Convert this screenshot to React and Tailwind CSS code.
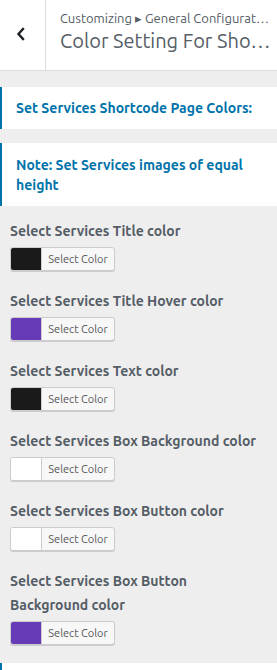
import React from "react";

const font = { fontFamily: "Ubuntu, 'Noto Sans', 'Open Sans', sans-serif" };

function ColorControl({ label, color }) {
  return (
    <div className="px-[10px] pb-[18px]">
      <div className="text-[14px] leading-[24px] font-bold text-[#555d66]">{label}</div>
      <div className="mt-[4px] flex h-[24px] w-[105px] overflow-hidden rounded-[3px] border border-[#ccc] bg-[#f7f7f7] shadow-[0_1px_0_#ccc]">
        <div className="w-[30px] shrink-0" style={{ backgroundColor: color }} />
        <div className="flex flex-1 items-center justify-center border-l border-[#ccc] text-[11px] text-[#555]">
          Select Color
        </div>
      </div>
    </div>
  );
}

export default function App() {
  const controls = [
    ["Select Services Title color", "#1a1a1a"],
    ["Select Services Title Hover color", "#673ab7"],
    ["Select Services Text color", "#1a1a1a"],
    ["Select Services Box Background color", "#ffffff"],
    ["Select Services Box Button color", "#ffffff"],
    ["Select Services Box Button Background color", "#673ab7"],
  ];
  return (
    <div className="h-[670px] w-[277px] overflow-hidden bg-[#eeeeee]" style={font}>
      <div className="flex h-[71px] border-b border-[#ddd] bg-white">
        <div className="flex w-[46px] shrink-0 items-center justify-center border-r border-[#ddd]">
          <svg width="10" height="14" viewBox="0 0 10 14" className="-ml-[4px] -mt-[2px]">
            <path d="M7 2 L2.5 7 L7 12" fill="none" stroke="#1d2327" strokeWidth="2.4" strokeLinecap="square" />
          </svg>
        </div>
        <div className="min-w-0 flex-1 pl-[14px] pr-[6px] pt-[9px]">
          <div className="truncate text-[13px] leading-[18px] text-[#555d66]">
            Customizing ▸ General Configuration
          </div>
          <div className="truncate text-[20px] leading-[28px] text-[#555d66]">
            Color Setting For Shortcode Page
          </div>
        </div>
      </div>
      <div className="mt-[16px] border-l-[2px] border-[#0073aa] bg-white py-[11px] pl-[14px] pr-[10px] text-[14px] leading-[20px] font-bold text-[#0073aa]">
        Set Services Shortcode Page Colors:
      </div>
      <div className="mt-[14px] border-l-[2px] border-[#0073aa] bg-white py-[11.5px] pl-[14px] pr-[10px] text-[14px] leading-[20px] font-bold text-[#0073aa]">
        Note: Set Services images of equal height
      </div>
      <div className="pt-[13px]">
        {controls.map(([l, c]) => (
          <ColorControl key={l} label={l} color={c} />
        ))}
      </div>
      <div className="border-l-[2px] border-[#0073aa] bg-white h-[20px]" />
    </div>
  );
}
